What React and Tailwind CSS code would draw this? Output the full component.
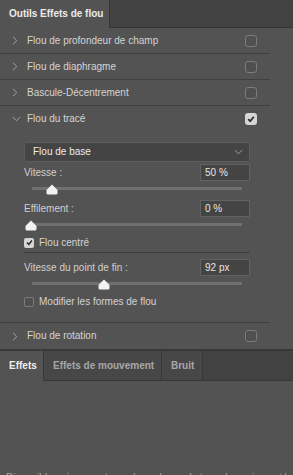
import React from "react";

const ChevRight = () => (
  <svg width="6" height="9" viewBox="0 0 6 9" className="block">
    <path d="M1 0.8 L4.8 4.5 L1 8.2" stroke="#a3a3a3" strokeWidth="1" fill="none" />
  </svg>
);

const ChevDown = ({ color = "#a3a3a3" }) => (
  <svg width="9" height="6" viewBox="0 0 9 6" className="block">
    <path d="M0.8 1 L4.5 4.8 L8.2 1" stroke={color} strokeWidth="1" fill="none" />
  </svg>
);

const Check = ({ size = 8 }) => (
  <svg width={size} height={size} viewBox="0 0 8 8" className="block">
    <path d="M1.2 4.2 L3.2 6.2 L6.8 1.8" stroke="#2f2f2f" strokeWidth="1.8" fill="none" />
  </svg>
);

const BigBox = ({ checked }) =>
  checked ? (
    <div className="flex h-[12px] w-[12px] items-center justify-center rounded-[3px] bg-[#d6d6d6]">
      <Check />
    </div>
  ) : (
    <div className="h-[12px] w-[12px] rounded-[3px] border border-[#7c7c7c] bg-[#505050]" />
  );

const SmallBox = ({ checked }) =>
  checked ? (
    <div className="flex h-[10px] w-[10px] items-center justify-center rounded-[2px] bg-[#d6d6d6]">
      <Check size={7} />
    </div>
  ) : (
    <div className="h-[10px] w-[10px] rounded-[2px] border border-[#7c7c7c] bg-[#505050]" />
  );

const Row = ({ label, open, checked, border = true }) => (
  <div
    className={`flex h-[26px] items-center pl-[12px] pr-[13px] ${
      border ? "border-b border-[#404040]" : ""
    }`}
  >
    <div className="flex w-[15px] items-center">{open ? <ChevDown /> : <ChevRight />}</div>
    <div className="flex-1 text-[#d4d4d4]">{label}</div>
    <BigBox checked={checked} />
  </div>
);

const Thumb = () => (
  <svg width="12" height="11" viewBox="0 0 12 11" className="block">
    <path d="M6 0.5 L11.5 6 V9 Q11.5 10.5 10 10.5 H2 Q0.5 10.5 0.5 9 V6 Z" fill="#f2f2f2" />
  </svg>
);

const Slider = ({ pos }) => (
  <div className="relative h-[19px] pt-[6px]">
    <div className="ml-[8px] h-[3px] w-[210px] bg-[#707070]" />
    <div className="absolute top-[3px]" style={{ left: pos - 6 }}>
      <Thumb />
    </div>
  </div>
);

const FieldRow = ({ label, value }) => (
  <div className="flex h-[17px] items-center justify-between">
    <div className="text-[#d0d0d0]">{label}</div>
    <div className="flex h-[17px] w-[50px] items-center border border-[#626262] bg-[#444444] pl-[4px] text-[#e6e6e6]">
      {value}
    </div>
  </div>
);

export default function App() {
  return (
    <div
      className="h-[475px] w-[293px] overflow-hidden bg-[#535353] text-[10px] leading-[12px]"
      style={{ fontFamily: '"Liberation Sans", Arial, sans-serif' }}
    >
      {/* Top tab bar */}
      <div className="flex h-[28px] bg-[#424242]">
        <div className="flex w-[110px] items-center border-r border-[#363636] bg-[#535353] pl-[9px] font-bold text-[#ececec]">
          Outils Effets de flou
        </div>
        <div className="flex-1 border-b border-[#363636]" />
      </div>

      <div className="w-[270px]">
        <Row label="Flou de profondeur de champ" />
        <Row label="Flou de diaphragme" />
        <Row label="Bascule-Décentrement" />
        <Row label="Flou du tracé" open checked border={false} />

        <div className="border-b border-[#404040] pb-[14px] pl-[24px] pr-[20px] pt-[10px]">
          <div className="flex h-[20px] items-center justify-between rounded-[2px] border border-[#5c5c5c] bg-[#444444] pl-[8px] pr-[6px] text-[#ececec]">
            <span>Flou de base</span>
            <ChevDown color="#9a9a9a" />
          </div>
          <div className="pt-[2px]">
            <FieldRow label="Vitesse :" value="50 %" />
          </div>
          <Slider pos={28} />
          <FieldRow label="Effilement :" value="0 %" />
          <Slider pos={7} />
          <div className="flex h-[13px] items-center">
            <SmallBox checked />
            <span className="ml-[5px] text-[#d4d4d4]">Flou centré</span>
          </div>
          <div className="mt-[3px] h-px bg-[#3e3e3e]" />
          <div className="pt-[6px]">
            <FieldRow label="Vitesse du point de fin :" value="92 px" />
          </div>
          <Slider pos={80} />
          <div className="flex h-[13px] items-center">
            <SmallBox />
            <span className="ml-[5px] text-[#d4d4d4]">Modifier les formes de flou</span>
          </div>
        </div>

        <Row label="Flou de rotation" border={false} />
      </div>

      {/* Bottom tab bar */}
      <div className="flex h-[32px] border-t-2 border-[#383838] bg-[#424242]">
        <div className="flex w-[44px] items-center border-r border-[#383838] bg-[#535353] pl-[9px] font-bold text-[#f0f0f0]">
          Effets
        </div>
        <div className="flex w-[118px] items-center border-b border-r border-[#383838] bg-[#474747] pl-[9px] font-bold text-[#a8a8a8]">
          Effets de mouvement
        </div>
        <div className="flex w-[41px] items-center border-b border-r border-[#383838] bg-[#474747] pl-[9px] font-bold text-[#a8a8a8]">
          Bruit
        </div>
        <div className="flex-1 border-b border-[#383838]" />
      </div>

      <div className="pt-[91px] whitespace-nowrap pl-[6px] text-[#a9a9a9]">
        Disponible uniquement pour les calques de type dynamique et les calques
      </div>
    </div>
  );
}
